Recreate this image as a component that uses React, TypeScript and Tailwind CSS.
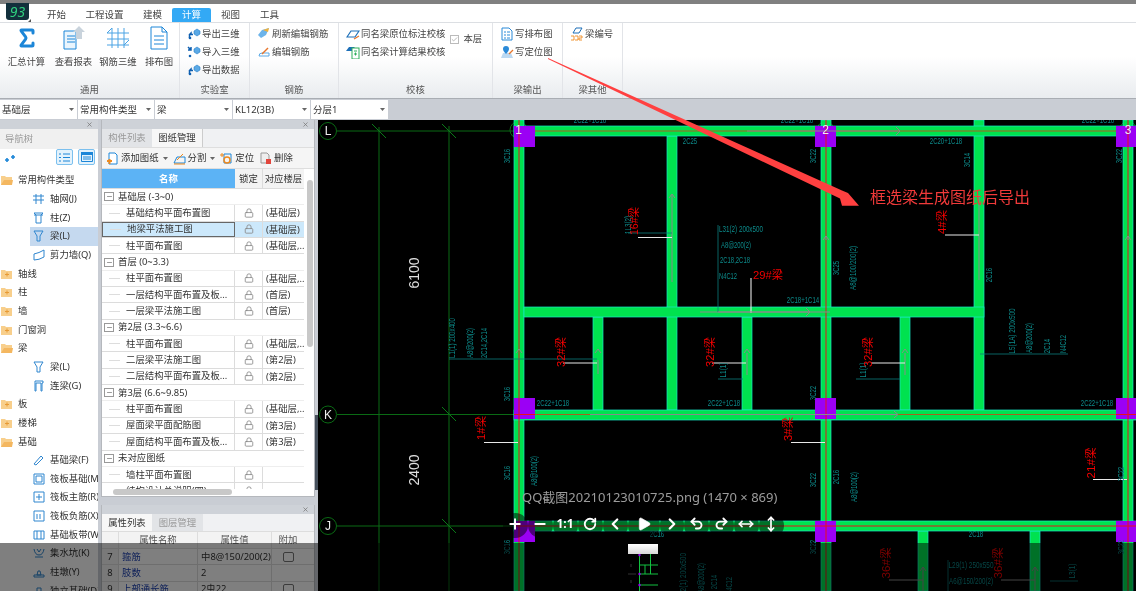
import React from "react";
import { Sigma, Lock, Minus, Plus, RotateCw, ChevronLeft, ChevronRight, Play, Undo2, Redo2, MoveHorizontal, MoveVertical, X, Check } from "lucide-react";

const B = "#1c86d8";

function Sm({ k }: { k: string }) {
  const c = { width: 14, height: 14, viewBox: "0 0 14 14", fill: "none" } as const;
  if (k === "out" || k === "in")
    return (
      <svg {...c}>
        <path d="M7 4l3-2 3 2v3l-3 2-3-2z" fill="#5aa9e6" stroke="#2a7fc8" strokeWidth=".6" />
        <path d={k === "out" ? "M2 8l2-2 0 1.5h2M2.5 11V8" : "M1 2l3 3M4 2v3H1"} stroke="#0f5fb0" strokeWidth="1.5" />
        <circle cx="3" cy="11" r="1.3" fill="#0f5fb0" />
      </svg>
    );
  if (k === "ref")
    return (
      <svg {...c}>
        <path d="M1 8l4-5 7-2-3 7-5 3z" fill="#6db4ea" />
        <path d="M6 3l6-2-1 4z" fill="#f2b13a" />
      </svg>
    );
  if (k === "edit")
    return (
      <svg {...c}>
        <path d="M2 11a3 3 0 0 1 3-3h7v3z" stroke="#5aa9e6" strokeWidth="1" />
        <path d="M5 9l6-6" stroke="#e8762c" strokeWidth="1.5" />
      </svg>
    );
  if (k === "eraser")
    return (
      <svg {...c}>
        <path d="M1 10l4-6h8l-4 6z" fill="#fff" stroke="#1d6fb8" strokeWidth="1.2" />
        <path d="M8 12l5-3" stroke="#e8762c" strokeWidth="1.2" />
      </svg>
    );
  if (k === "calc")
    return (
      <svg {...c}>
        <path d="M0 6l3-4h5l2 2v2z" fill="#1d6fb8" />
        <rect x="6" y="3" width="7" height="11" fill="#fff" stroke="#2fae5a" />
        <path d="M8 6h3M8 9h3M9.500 7.500v3" stroke="#2fae5a" />
      </svg>
    );
  if (k === "list")
    return (
      <svg {...c}>
        <path d="M2 1h7l3 3v9H2z" fill="#fff" stroke="#2b8ad8" />
        <path d="M4 5h2M7 5h3M4 8h2M7 8h3M4 11h2M7 11h3" stroke="#2b8ad8" />
      </svg>
    );
  if (k === "loc")
    return (
      <svg {...c}>
        <path d="M1 13l2-5h8l2 5z" fill="#bcd9f2" />
        <path d="M6 1a3 3 0 0 1 3 3c0 2-3 5-3 5S3 6 3 4a3 3 0 0 1 3-3z" fill="#2b8ad8" />
        <path d="M9 9l4-4" stroke="#e8762c" strokeWidth="1.3" />
      </svg>
    );
  return (
    <svg {...c}>
      <path d="M3 6l3-5h6l-3 5z" fill="#fff" stroke="#1d6fb8" />
      <path d="M1 9h3v4H1M5 9h3v4H5M9 9h3v2H9v2h3" stroke="#ee8a1f" strokeWidth=".9" />
    </svg>
  );
}

function SmRow({ k, t, ml = "ml-[7px]" }: { k: string; t: string; ml?: string }) {
  return (
    <div className={`flex h-[18px] items-center gap-[1px] whitespace-nowrap ${ml}`}>
      <Sm k={k} />
      <span>{t}</span>
    </div>
  );
}

function Big({ w, t, children }: { w: string; t: string; children: React.ReactNode }) {
  return (
    <div className={`flex flex-col items-center ${w}`}>
      <div className="flex h-[26px] w-[30px] items-center justify-center">{children}</div>
      <div className="mt-[4px] whitespace-nowrap leading-[13px]">{t}</div>
    </div>
  );
}

function Group({ w, title, children }: { w: string; title: string; children: React.ReactNode }) {
  return (
    <div className={`relative flex h-full shrink-0 flex-col border-r border-[#e2e4e8] ${w}`}>
      <div className="min-h-0 flex-1 pt-[2px]">{children}</div>
      <div className="h-[14px] text-center leading-[12px] text-[#555]">{title}</div>
    </div>
  );
}

function Combo({ t, w }: { t: string; w: string }) {
  return (
    <div className={`flex h-[19px] items-center justify-between bg-white pl-[2px] pr-[3px] text-[#333] ${w}`}>
      <span>{t}</span>
      <svg width="5" height="3" viewBox="0 0 5 3"><path d="M0 0h5L2.500 3z" fill="#666" /></svg>
    </div>
  );
}

function Strip() {
  return (
    <div className="flex h-[9px] shrink-0 items-center justify-end bg-[#ced2d8] pr-[5px]">
      <X size={7} color="#777" strokeWidth={2.5} />
    </div>
  );
}

function Folder({ open }: { open: boolean }) {
  return (
    <svg width="12" height="10" viewBox="0 0 12 10" className="shrink-0">
      <path d="M0 1h4l1 1h6v8H0z" fill="#f8cf8c" />
      {open ? <path d="M3 5h9l-1 5H0z" fill="#f4b760" /> : <path d="M4 5.500h4M6 3.500v4" stroke="#e79a35" strokeWidth="1" />}
    </svg>
  );
}

function TreeIcon({ n }: { n: string }) {
  const s = "#2f86cf";
  const d: Record<string, string> = {
    grid: "M3 1v10M8 1v10M0 3h11M0 7h11",
    col: "M1 1h9l-2 2v8H3V3zM1 3h9",
    beam: "M1 1h9L7 6v5H4V6z",
    wall: "M1 5q5-1 10-4v7q-5 3-10 3z",
    link: "M2 1h8v2H9v8H8V3H3v8H2z",
    fb: "M1 10L8 2l2 2-7 7z",
    box: "M1 1h10v10H1zM3 3h6v6H3z",
    cross: "M1 1h10v10H1zM6 3v6M3 6h6",
    neg: "M1 1h10v10H1zM4 4v5M7 4v5",
    band: "M1 2h10v8H1zM4 2v8M8 2v8",
    pit: "M1 2q1 6 5 6t5-6M4 2l2 3 2-3M2 10h8",
    pier: "M1 9h10v2H1zM4 9l1-4h2l1 4z",
    iso: "M4 3h4v5H4zM1 11h10",
  };
  return (
    <svg width="12" height="12" viewBox="0 0 12 12" fill="none" className="shrink-0">
      <path d={d[n]} stroke={s} strokeWidth="1" />
    </svg>
  );
}

const nav: [number, string, string?, boolean?][] = [
  [0, "常用构件类型", "o"],
  [1, "轴网(J)", "grid"],
  [1, "柱(Z)", "col"],
  [1, "梁(L)", "beam", true],
  [1, "剪力墙(Q)", "wall"],
  [0, "轴线"],
  [0, "柱"],
  [0, "墙"],
  [0, "门窗洞"],
  [0, "梁", "o"],
  [1, "梁(L)", "beam"],
  [1, "连梁(G)", "link"],
  [0, "板"],
  [0, "楼梯"],
  [0, "基础", "o"],
  [1, "基础梁(F)", "fb"],
  [1, "筏板基础(M)", "box"],
  [1, "筏板主筋(R)", "cross"],
  [1, "筏板负筋(X)", "neg"],
  [1, "基础板带(W)", "band"],
  [1, "集水坑(K)", "pit"],
  [1, "柱墩(Y)", "pier"],
  [1, "独立基础(D)", "iso"],
];

const rows: [string, string?, string?][] = [
  ["基础层 (-3~0)"],
  ["基础结构平面布置图", "(基础层)"],
  ["地梁平法施工图", "(基础层)", "s"],
  ["柱平面布置图", "(基础层,..."],
  ["首层 (0~3.3)"],
  ["柱平面布置图", "(基础层,..."],
  ["一层结构平面布置及板...", "(首层)"],
  ["一层梁平法施工图", "(首层)"],
  ["第2层 (3.3~6.6)"],
  ["柱平面布置图", "(基础层,..."],
  ["二层梁平法施工图", "(第2层)"],
  ["二层结构平面布置及板...", "(第2层)"],
  ["第3层 (6.6~9.85)"],
  ["柱平面布置图", "(基础层,..."],
  ["屋面梁平面配筋图", "(第3层)"],
  ["屋面结构平面布置及板...", "(第3层)"],
  ["未对应图纸"],
  ["墙柱平面布置图", ""],
  ["结构设计总说明(四)", ""],
];

function TRow({ r }: { r: [string, string?, string?] }) {
  if (r[1] === undefined)
    return (
      <div className="flex h-[16.35px] items-center gap-[4px] border-b border-[#eee] pl-[2px] text-[#333]">
        <span className="flex h-[9px] w-[10px] items-center justify-center border border-[#999] bg-white">
          <Minus size={7} color="#555" />
        </span>
        {r[0]}
      </div>
    );
  const sel = r[2] === "s";
  return (
    <div className={`flex h-[16.35px] border-b border-[#dcdcdc] ${sel ? "bg-[#cce8fb]" : ""}`}>
      <div className={`flex w-[133px] items-center whitespace-nowrap pl-[1px] ${sel ? "border border-[#666]" : "border-r border-[#dcdcdc]"}`}>
        <span className="ml-[6px] mr-[6px] h-px w-[11px] bg-[#ddd]" />
        {r[0]}
      </div>
      <div className="flex w-[28px] items-center justify-center border-r border-[#dcdcdc]">
        <Lock size={10} color="#888" />
      </div>
      <div className="flex-1 overflow-hidden whitespace-nowrap pl-[3px] leading-[15px]">{r[1]}</div>
    </div>
  );
}

function T({ x, y, t, c = "#0c8a8a", s = 9, r = true, k = 3.6, l }: { x: number; y: number; t: string; c?: string; s?: number; r?: boolean; k?: number; l?: number }) {
  return (
    <text
      x={x}
      y={y}
      fill={c}
      fontSize={s}
      textAnchor="middle"
      dominantBaseline="middle"
      textLength={l ?? t.length * k}
      lengthAdjust="spacingAndGlyphs"
      transform={r ? `rotate(-90 ${x} ${y})` : undefined}
    >
      {t}
    </text>
  );
}

const G = "#00e24f";
const vb: [number, number, number][] = [
  [514, 120, 591], [821, 120, 591], [1123, 120, 591],
  [667, 136, 410], [974, 120, 410], [593, 317, 410], [742, 317, 410], [900, 317, 410],
  [918, 531, 591], [1030, 531, 591],
];
const hb: [number, number, number][] = [
  [514, 1136, 126], [524, 984, 307], [514, 1136, 410], [514, 1136, 521],
];
const tick = (x: number, y: number) => <path key={`${x}-${y}`} d={`M${x - 7} ${y - 7}L${x + 7} ${y + 7}`} stroke="#0a7a18" />;

function Cad() {
  return (
    <svg width="818" height="471" viewBox="318 120 818 471" className="block bg-black" style={{ fontFamily: "'Liberation Sans', 'Noto Sans CJK SC', sans-serif" }}>
      <g stroke="#0a6a14" strokeWidth="1" fill="none">
        <path d="M337 131H514M337 414.500H514M337 526H514M379 127V591M449 126V591" />
        <circle cx="328" cy="131" r="8.500" />
        <circle cx="328" cy="414.500" r="8.500" />
        <circle cx="328" cy="526" r="8.500" />
        <circle cx="518.500" cy="130" r="8.500" />
        <circle cx="825.500" cy="130" r="8.500" />
        <circle cx="1128" cy="130" r="8.500" />
      </g>
      <g strokeWidth="1">{[[379, 131], [449, 131], [449, 414], [449, 526]].map(([x, y]) => tick(x, y))}</g>
      {vb.map(([x, a, b]) => (
        <rect key={`${x}${a}`} x={x} y={a} width="10" height={b - a} fill={G} stroke="#18e8c8" strokeWidth=".7" />
      ))}
      {hb.map(([a, b, y]) => (
        <rect key={`${a}${y}`} x={a} y={y} width={b - a} height="10" fill={G} stroke="#18e8c8" strokeWidth=".7" />
      ))}
      <path d="M519 120V591M826 120V591M1128 120V591M524 526H1136" stroke="#e8101a" strokeWidth="1" />
      <path d="M524 131H1136M524 414.500H1136" stroke="#a8601e" strokeWidth="1.2" />
      <g fill="#9b00f5">
        {[[514, 126], [815, 126], [1116, 126], [514, 398], [815, 398], [1116, 398], [514, 521], [815, 521], [1116, 521]].map(([x, y]) => (
          <rect key={`${x}${y}`} x={x} y={y} width="21" height="21" />
        ))}
      </g>
      <path d="M519 126V147M826 126V147M1128 126V147M519 398V419M826 398V419M1128 398V419M519 521V542M826 521V542M1128 521V542M514 414.500H535M815 414.500H836M1116 414.500H1136M514 526H535M815 526H836M1116 526H1136" stroke="#e8101a" />
      <g stroke="#8a8a8a" strokeWidth="1" fill="none">
        <path d="M672 282V195M669 198L672 194L675 198M979 280V195M826 240V236M823 240L826 236L829 240M519 350H519M516 353L519 349L522 353M1128 240V236M1125 240L1128 236L1131 240" />
        <path d="M747 131H899M896 127L900 131L896 135M700 312H809M806 308L810 312L806 316M590 414.500H897M894 411L898 414.500L894 418" />
        <path d="M598 360V374M595 353L598 349L601 353M747 353L747 375M744 353L747 349L750 353M905 353V375M902 353L905 349L908 353" />
        <path d="M923 591V567M920 571L923 567L926 571M1035 591V567M1032 571L1035 567L1038 571" />
      </g>
      <g stroke="#e8e8e8" strokeWidth="1.100" fill="none">
        <path d="M638 237.500H672M751 278V313M945 235H979M563 363H597M712 363H746M871 363H905M484 442.500H518M791 442.500H825M1093 479.500H1127" />
      </g>
      <path d="M889 580H923M1001 580H1035" stroke="#8a8a8a" strokeWidth="1.200" />
      <g stroke="#0b7b7b" fill="none" strokeWidth=".8">
        <path d="M718 225V312M449 359H597M980 354H1068M856 379H900M718 379H743M948 560V591M628 233H672M1050 581H1078" />
      </g>
      <path d="M718 312H830" stroke="#8a8a8a" />

      <T x={507.500} y={156} t="3C16" />
      <T x={690} y={142} t="2C25" r={false} />
      <T x={590} y={121} t="2C22+1C18" r={false} />
      <T x={797} y={121} t="2C22+1C18" r={false} />
      <T x={1098} y={121} t="2C22+1C18" r={false} />
      <T x={814} y={156} t="3C22" />
      <T x={1120} y={156} t="3C22" />
      <T x={946} y={142} t="2C20+1C18" r={false} />
      <T x={968} y={160} t="3C14" />
      <T x={629} y={225} t="1L3(2)" k={3} />
      <T x={741} y={230} t="L31(2) 200x500" r={false} l={44} />
      <T x={736} y={246} t="A8@200(2)" r={false} l={30} />
      <T x={735} y={261} t="2C18,2C18" r={false} l={30} />
      <T x={728} y={277} t="N4C12" r={false} l={18} />
      <T x={837} y={268} t="3C25" />
      <T x={854} y={268} t="A8@100/200(2)" l={44} />
      <T x={990} y={275} t="2C16" />
      <T x={803} y={301} t="2C18+1C14" r={false} />
      <T x={1013} y={331} t="L5(1A) 200x500" l={45} />
      <T x={1030} y={338} t="A8@200(2)" l={30} />
      <T x={1048} y={346} t="2C14" />
      <T x={1064} y={344} t="N4C12" />
      <T x={453} y={338} t="L1(1) 200x400" l={40} />
      <T x={471} y={343} t="A8@200(2)" l={30} />
      <T x={485} y={343} t="2C14,2C14" l={30} />
      <T x={507.500} y={394} t="3C16" />
      <T x={553} y={404} t="2C22+1C18" r={false} />
      <T x={724} y={404} t="2C22+1C18" r={false} />
      <T x={1097} y={404} t="2C22+1C18" r={false} />
      <T x={814} y={393} t="3C22" />
      <T x={724} y={370} t="L1(1)" k={3} />
      <T x={864} y={370} t="L1(1)" k={3} />
      <T x={507.500} y={473} t="3C16" />
      <T x={535} y={471} t="A8@100(2)" l={30} />
      <T x={814} y={480} t="3C22" />
      <T x={837} y={477} t="2C16" />
      <T x={855} y={487} t="A8@100(2)" l={30} />
      <T x={1122} y={474} t="3C22" />
      <T x={976} y={535} t="2C18" r={false} />
      <T x={657} y={535} t="2C16" r={false} />
      <T x={971} y={566} t="L29(1) 250x550" r={false} l={45} />
      <T x={971} y={582} t="A6@150/200(2)" r={false} l={44} />
      <T x={1073} y={571} t="L3(1)" k={3} />
      <T x={507.500} y={547} t="3C16" />
      <T x={814} y={547} t="3C22" />
      <T x={1122} y={547} t="3C22" />
      <T x={684} y={574} t="L2(1) 200x500" l={42} />
      <T x={702} y={578} t="A8@200(2)" l={30} />
      <T x={715} y={582} t="2C14" />
      <T x={730} y={586} t="N4C12" />

      <T x={635} y={221} t="16#梁" c="#f00000" s={11} l={28} />
      <T x={562} y={352} t="32#梁" c="#f00000" s={11} l={30} />
      <T x={711} y={352} t="32#梁" c="#f00000" s={11} l={30} />
      <T x={869} y={352} t="32#梁" c="#f00000" s={11} l={30} />
      <T x={943} y={222} t="4#梁" c="#f00000" s={11} l={24} />
      <T x={768} y={276} t="29#梁" c="#f00000" s={11} r={false} l={30} />
      <T x={482} y={428} t="1#梁" c="#f00000" s={11} l={24} />
      <T x={789} y={429} t="3#梁" c="#f00000" s={11} l={24} />
      <T x={1092} y={463} t="21#梁" c="#f00000" s={11} l={31} />
      <T x={887} y={563} t="36#梁" c="#f00000" s={11} l={31} />
      <T x={999} y={563} t="36#梁" c="#f00000" s={11} l={31} />
      <T x={415} y={273} t="6100" c="#e0e0e0" s={15} l={31} />
      <T x={415} y={470} t="2400" c="#e0e0e0" s={15} l={31} />
      {[[328, 131, "L"], [328, 414.500, "K"], [328, 526, "J"], [518.500, 130, "1"], [825.500, 130, "2"], [1128, 130, "3"]].map(([x, y, t]) => (
        <text key={String(t)} x={x as number} y={y as number} fill="#eee" fontSize="12" textAnchor="middle" dominantBaseline="central">{t as string}</text>
      ))}
    </svg>
  );
}

const tools: [string, React.ReactNode][] = [
  ["w-[25px]", <Plus size={16} strokeWidth={3} />],
  ["w-[25px]", <Minus size={16} strokeWidth={3} />],
  ["w-[25px]", <span className="text-[12px] font-bold">1:1</span>],
  ["w-[25px]", <RotateCw size={14} strokeWidth={3.2} />],
  ["w-[25px]", <ChevronLeft size={18} strokeWidth={3} />],
  ["w-[32px]", <Play size={16} fill="white" strokeWidth={1} />],
  ["w-[24px]", <ChevronRight size={18} strokeWidth={3} />],
  ["w-[25px]", <Undo2 size={15} strokeWidth={3} />],
  ["w-[25px]", <Redo2 size={15} strokeWidth={3} />],
  ["w-[25px]", <MoveHorizontal size={16} strokeWidth={2.5} />],
  ["w-[25px]", <MoveVertical size={16} strokeWidth={2.5} />],
];

export default function App() {
  return (
    <div className="relative flex h-[591px] w-[1136px] flex-col overflow-hidden bg-[#c9cdd4] text-[9.4px] leading-[12px] text-[#333] blur-[0.3px] [font-family:'Noto_Sans','Noto_Sans_CJK_SC',sans-serif]">
      <div className="h-[4px] shrink-0 bg-[#808080]" />
      {/* tabs */}
      <div className="flex h-[18px] shrink-0 items-end bg-white text-[9.5px] text-[#444]">
        <div className="ml-[47px] flex h-[14px] items-center gap-[19.500px]">
          <span>开始</span>
          <span>工程设置</span>
          <span>建模</span>
        </div>
        <div className="ml-[10px] flex h-[14px] w-[39px] items-center justify-center rounded-t-[2px] bg-[#33a9f5] text-white">计算</div>
        <div className="ml-[10px] flex h-[14px] items-center gap-[20px]">
          <span>视图</span>
          <span>工具</span>
        </div>
      </div>
      {/* logo */}
      <div className="absolute left-[6px] top-[3px] flex h-[17px] w-[23px] items-center justify-center rounded-b-[3px] bg-[#12303c] text-[14px] italic text-[#2fd07f]">93</div>
      <div className="absolute left-[28px] top-[19px] h-0 w-0 border-b-[3px] border-l-[3px] border-b-[#555] border-l-transparent" />
      {/* ribbon */}
      <div className="flex h-[76px] shrink-0 border-t border-[#dcdfe3] bg-gradient-to-b from-white from-[45%] to-[#e9ecef] text-[#444]">
        <Group w="w-[180px]" title="通用">
          <div className="flex">
            <Big w="w-[49px] ml-[2px]" t="汇总计算"><Sigma size={24} color={B} strokeWidth={3} /></Big>
            <Big w="w-[45px]" t="查看报表">
              <svg width="24" height="26" viewBox="0 0 24 26" fill="none">
                <path d="M2 6h12v18H2z" fill="#eaf5fd" stroke={B} />
                <path d="M5 11h8M5 14h8M5 17h8" stroke={B} />
                <path d="M17 1l6 6h-3v7h-6V7h-3z" fill="#c9d3dc" />
              </svg>
            </Big>
            <Big w="w-[44px]" t="钢筋三维">
              <svg width="24" height="22" viewBox="0 0 24 22" fill="none" stroke="#4aa3e4">
                <path d="M1 6h22M1 12h22M1 18h22M6 1v20M12 1v20M18 1v20" />
                <path d="M1 6l5-5M18 18l5-5" />
              </svg>
            </Big>
            <Big w="w-[38px]" t="排布图">
              <svg width="20" height="24" viewBox="0 0 20 24" fill="none" stroke={B}>
                <path d="M2 1h11l5 5v17H2z" fill="#fff" />
                <path d="M13 1v5h5M5 10h10M5 14h10M5 18h10" />
              </svg>
            </Big>
          </div>
        </Group>
        <Group w="w-[70px]" title="实验室">
          <SmRow k="out" t="导出三维" />
          <SmRow k="in" t="导入三维" />
          <SmRow k="out" t="导出数据" />
        </Group>
        <Group w="w-[89px]" title="钢筋">
          <SmRow k="ref" t="刷新编辑钢筋" />
          <SmRow k="edit" t="编辑钢筋" />
        </Group>
        <Group w="w-[154px]" title="校核">
          <div className="flex">
            <div>
              <SmRow k="eraser" t="同名梁原位标注校核" />
              <SmRow k="calc" t="同名梁计算结果校核" />
            </div>
            <div className="ml-[5px] mt-[9px] flex h-[10px] items-center gap-[4px]">
              <span className="flex h-[9px] w-[9px] items-center justify-center border border-[#bbb] bg-white">
                <Check size={7} color="#888" strokeWidth={2} />
              </span>
              <span>本层</span>
            </div>
          </div>
        </Group>
        <Group w="w-[70px]" title="梁输出">
          <SmRow k="list" t="写排布图" />
          <SmRow k="loc" t="写定位图" />
        </Group>
        <Group w="w-[60px]" title="梁其他">
          <SmRow k="num" t="梁编号" />
        </Group>
      </div>
      {/* combos */}
      <div className="flex h-[22px] shrink-0 items-center gap-px border-t border-[#a9adb3] bg-[#c9cdd4] text-[9.5px]">
        <Combo t="基础层" w="w-[77px]" />
        <Combo t="常用构件类型" w="w-[76px]" />
        <Combo t="梁" w="w-[77px]" />
        <Combo t="KL12(3B)" w="w-[77px]" />
        <Combo t="分层1" w="w-[77px]" />
      </div>
      {/* body */}
      <div className="flex min-h-0 flex-1">
        {/* nav */}
        <div className="flex w-[98px] shrink-0 flex-col overflow-hidden bg-white">
          <Strip />
          <div className="flex h-[20px] shrink-0 items-center bg-[#f0f0f0] pl-[5px] text-[#999]">导航树</div>
          <div className="flex h-[22px] shrink-0 items-start">
            <svg width="12" height="10" viewBox="0 0 12 10" className="ml-[4px] mt-[5px]"><path d="M1 6h4M3 4v4M7 3h4M9 1v4" stroke="#1c86d8" strokeWidth="1.6" /></svg>
            <div className="ml-[40px] flex h-[16px] w-[17px] items-center justify-center rounded-[2px] border border-[#7cc0ee] bg-[#e3f2fc]">
              <svg width="11" height="9" viewBox="0 0 11 9"><path d="M0 1h2M4 1h7M0 4.500h2M4 4.500h7M0 8h2M4 8h7" stroke="#1c86d8" /></svg>
            </div>
            <div className="ml-[5px] flex h-[16px] w-[17px] items-center justify-center rounded-[2px] border border-[#7cc0ee] bg-[#e3f2fc]">
              <svg width="12" height="10" viewBox="0 0 12 10"><path d="M.5.500h11v9H.5zM2 5h8M2 7h8" stroke="#1c86d8" fill="none" /><path d="M0 0h12v3H0z" fill="#1c86d8" /></svg>
            </div>
          </div>
          {nav.map(([lv, t, ic, sel], i) =>
            lv === 0 ? (
              <div key={i} className="flex h-[18.670px] shrink-0 items-center gap-[5px] pl-[1px]">
                <Folder open={ic === "o"} />
                <span>{t}</span>
              </div>
            ) : (
              <div key={i} className={`ml-[30px] flex h-[18.670px] shrink-0 items-center gap-[5px] whitespace-nowrap pl-[3px] ${sel ? "bg-[#c5d9ef]" : ""}`}>
                <TreeIcon n={ic as string} />
                <span>{t}</span>
              </div>
            ),
          )}
        </div>
        {/* middle */}
        <div className="ml-[3px] flex w-[214px] shrink-0 flex-col">
          <div className="flex h-[377px] shrink-0 flex-col overflow-hidden border-x border-b border-[#b5b8bd] bg-white">
            <Strip />
            <div className="flex h-[18px] shrink-0 bg-[#f0f1f3]">
              <div className="flex w-[50px] items-center justify-center bg-[#e2e4e7] text-[#999]">构件列表</div>
              <div className="flex w-[51px] items-center justify-center border-r border-[#ccc] bg-[#f7f7f7] text-[#333]">图纸管理</div>
            </div>
            <div className="flex h-[22px] shrink-0 items-center gap-[2px] border-y border-[#dedede] bg-[#f5f5f5] pl-[4px]">
              <svg width="13" height="13" viewBox="0 0 13 13" fill="none"><path d="M3 1h6l2 2v9H3z" stroke="#1c86d8" fill="#fff" /><path d="M1 9h5M3.500 7v5" stroke="#ee8a1f" strokeWidth="2" /></svg>
              <span>添加图纸</span>
              <svg width="5" height="3" viewBox="0 0 5 3" className="mx-[2px]"><path d="M0 0h5L2.500 3z" fill="#666" /></svg>
              <svg width="13" height="13" viewBox="0 0 13 13" fill="none" className="ml-[1px]"><path d="M1 11l3-6h8v6z" stroke="#1c86d8" /><path d="M1 12h11M4 8l6-6" stroke="#ee8a1f" /></svg>
              <span>分割</span>
              <svg width="5" height="3" viewBox="0 0 5 3" className="mx-[2px]"><path d="M0 0h5L2.500 3z" fill="#666" /></svg>
              <svg width="13" height="13" viewBox="0 0 13 13" fill="none" className="ml-[1px]"><path d="M4 2h7v9H4z" stroke="#1c86d8" /><circle cx="7" cy="8" r="3" stroke="#ee8a1f" strokeWidth="1.500" /><path d="M2 1v4M0 3h4" stroke="#ee8a1f" /></svg>
              <span>定位</span>
              <svg width="13" height="13" viewBox="0 0 13 13" fill="none" className="ml-[3px]"><path d="M2 1h6l2 2v8H2z" stroke="#999" fill="#eee" /><rect x="7" y="7" width="5" height="5" fill="#e2453c" /></svg>
              <span>删除</span>
            </div>
            <div className="flex min-h-0 flex-1">
              <div className="flex min-h-0 w-[202px] shrink-0 flex-col overflow-hidden">
                <div className="flex h-[20px] shrink-0 border-b border-[#dcdcdc]">
                  <div className="flex w-[133px] items-center justify-center bg-[#5cb3f5] font-bold text-white">名称</div>
                  <div className="flex w-[28px] items-center justify-center border-r border-[#dcdcdc] bg-[#f3f3f3]">锁定</div>
                  <div className="flex flex-1 items-center justify-center overflow-hidden whitespace-nowrap bg-[#f3f3f3]">对应楼层</div>
                </div>
                <div className="min-h-0 flex-1 overflow-hidden">
                  {rows.map((r, i) => (
                    <TRow key={i} r={r} />
                  ))}
                </div>
                <div className="h-[7px] shrink-0 bg-white pl-[11px]">
                  <div className="h-[6px] w-[119px] rounded-full bg-[#c8c8c8]" />
                </div>
              </div>
              <div className="pl-[3px] pt-[11px]">
                <div className="h-[167px] w-[6px] rounded-full bg-[#c8c8c8]" />
              </div>
            </div>
          </div>
          <div className="mt-[8px] flex min-h-0 flex-1 flex-col overflow-hidden border-x border-[#b5b8bd] bg-white">
            <Strip />
            <div className="flex h-[18px] shrink-0 border-b border-[#ddd] bg-[#f0f1f3]">
              <div className="flex w-[50px] items-center justify-center bg-[#f7f7f7]">属性列表</div>
              <div className="flex w-[51px] items-center justify-center bg-[#e2e4e7] text-[#999]">图层管理</div>
            </div>
            <div className="flex h-[17px] shrink-0 border-b border-[#ddd] bg-[#f3f3f3] text-[#555]">
              <div className="w-[17px] border-r border-[#ddd]" />
              <div className="flex w-[79px] items-center justify-center border-r border-[#ddd]">属性名称</div>
              <div className="flex w-[74px] items-center justify-center border-r border-[#ddd]">属性值</div>
              <div className="flex w-[32px] items-center justify-center">附加</div>
            </div>
            {[["7", "箍筋", "中8@150/200(2)", true], ["8", "肢数", "2", false], ["9", "上部通长筋", "2虫22", true]].map(([n, a, v, c]) => (
              <div key={n as string} className="flex h-[16.350px] shrink-0 border-b border-[#ddd]">
                <div className="flex w-[17px] items-center justify-center border-r border-[#ddd] bg-[#f3f3f3]">{n}</div>
                <div className="flex w-[79px] items-center border-r border-[#ddd] pl-[3px] text-[#1b3fb0]">{a}</div>
                <div className="flex w-[74px] items-center overflow-hidden whitespace-nowrap border-r border-[#ddd] pl-[3px]">{v}</div>
                <div className="flex w-[32px] items-center justify-center">
                  {c ? <span className="h-[10px] w-[11px] rounded-[2px] border border-[#777] bg-white" /> : null}
                </div>
              </div>
            ))}
          </div>
        </div>
        <div className="flex w-[3px] shrink-0 flex-col bg-[#c9cdd4] pt-[295px]">
          <div className="h-[75px] w-[3px] bg-[#46505c]" />
        </div>
        <Cad />
      </div>

      {/* big annotation arrow */}
      <svg width="1136" height="591" viewBox="0 0 1136 591" className="pointer-events-none absolute left-0 top-0">
        <path d="M548 58L842 190.500L848 193L859 205.700L842 205.700L840 198.500L548 59z" fill="#ff4040" />
      </svg>
      <div className="absolute left-[870px] top-[186px] whitespace-nowrap text-[16px] leading-[22px] text-[#f03a3a]">框选梁生成图纸后导出</div>

      {/* viewer overlay */}
      <div className="absolute bottom-0 left-0 h-[48px] w-full bg-black/50" />
      <div className="absolute left-[522px] top-[488px] whitespace-nowrap text-[13px] leading-[18px] text-[#9c9c9c]">QQ截图20210123010725.png (1470 × 869)</div>
      <div className="absolute left-[502.500px] top-[513px] flex h-[25px] text-white">
        {tools.map(([w, ic], i) => (
          <div key={i} className={`flex h-[25px] items-center justify-center rounded-full bg-black/50 pb-[4px] ${w}`}>{ic}</div>
        ))}
      </div>
      <div className="absolute left-[628px] top-[544px] h-[47px] w-[30px]">
        <div className="h-[10px] w-[30px] bg-gradient-to-b from-white to-[#d8d8d8]" />
        <svg width="30" height="37" viewBox="0 0 30 37" className="block" fill="none">
          <path d="M11.500 0V37M22.500 0V17M11.500 11H30M11.500 20H30M17 11V20M22.500 11V20M11.500 31H30" stroke="#12c040" />
          <path d="M0 20h8M3 10v3M3 26v3" stroke="#333" />
          <circle cx="11.500" cy="1" r="1.200" fill="#9b00f5" />
          <circle cx="11.500" cy="20" r="1.200" fill="#9b00f5" />
          <circle cx="11.500" cy="31" r="1.200" fill="#9b00f5" />
        </svg>
      </div>
    </div>
  );
}
